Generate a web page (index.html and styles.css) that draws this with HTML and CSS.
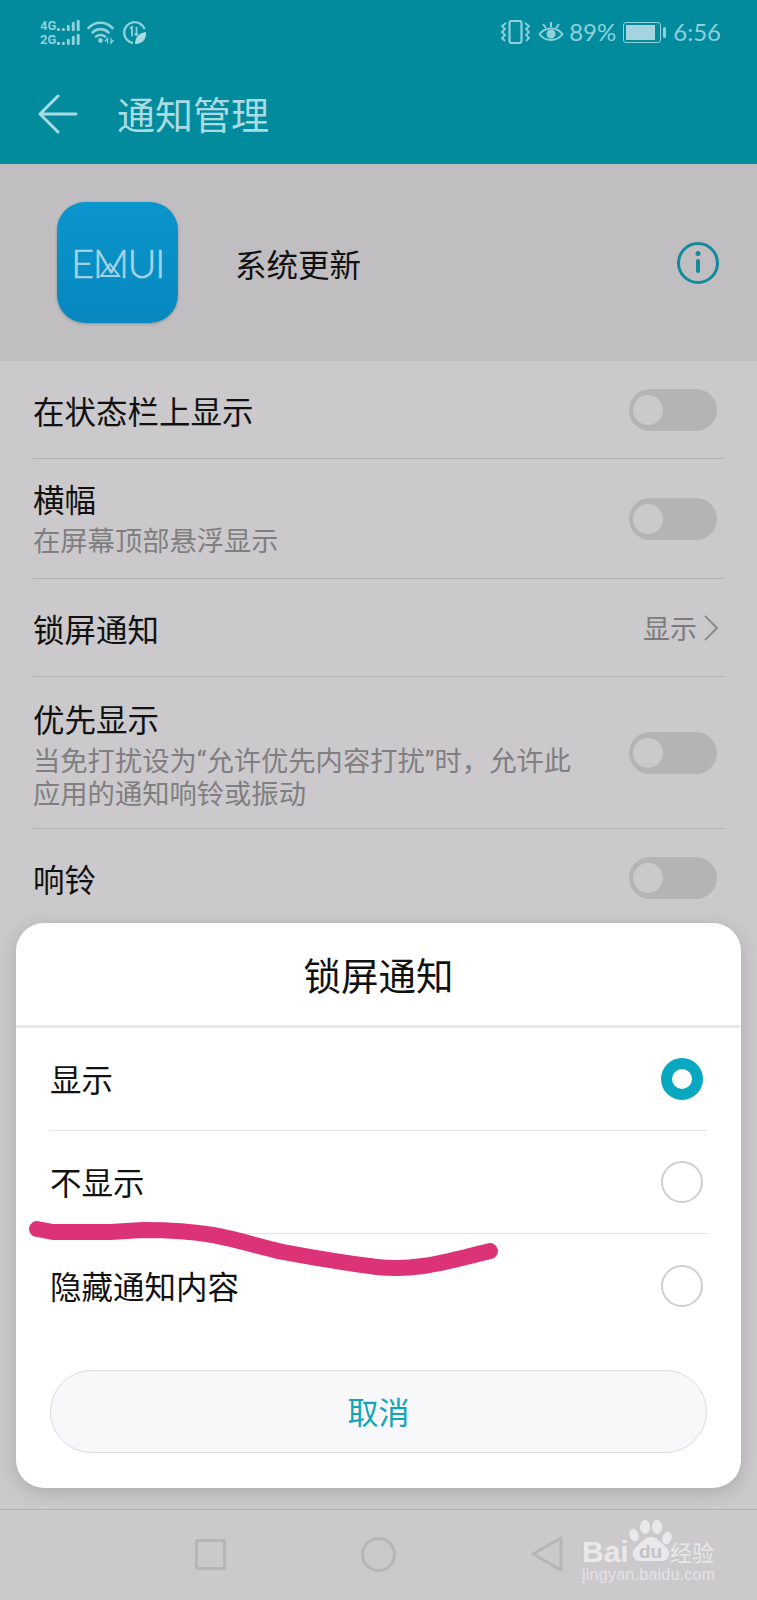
FILE: index.html
```html
<!DOCTYPE html>
<html lang="zh">
<head>
<meta charset="utf-8">
<title>通知管理</title>
<link rel="stylesheet" href="styles.css">
</head>
<body>
<div class="phone">
  <header class="topbar">
    <div class="status">
      <div class="status-group">
        <div class="signal">
          <div class="signal-line"><span class="net">4G</span><svg width="25" height="11" viewBox="0 0 25 11"><g fill="#8fd0da"><rect x="1" y="8" width="3" height="3" rx="1"/><rect x="6" y="8" width="3" height="3" rx="1"/><rect x="11" y="5" width="3" height="6" rx="1"/><rect x="16" y="2" width="3" height="9" rx="1"/><rect x="21" y="0" width="3" height="11" rx="1"/></g></svg></div>
          <div class="signal-line"><span class="net">2G</span><svg width="25" height="11" viewBox="0 0 25 11"><g fill="#8fd0da"><rect x="1" y="8" width="3" height="3" rx="1"/><rect x="6" y="8" width="3" height="3" rx="1"/><rect x="11" y="5" width="3" height="6" rx="1"/><rect x="16" y="2" width="3" height="9" rx="1"/><rect x="21" y="0" width="3" height="11" rx="1"/></g></svg></div>
        </div>
        <svg class="wifi" width="28" height="25" viewBox="0 0 28 25" fill="none" stroke="#8fd0da" stroke-width="2.600" stroke-linecap="round"><path d="M1.500 8C8 1 19 1 25.500 8"/><path d="M5.500 12.500C10 8 17 8 21.500 12.500"/><path d="M9 16.500C11.500 14.500 15.500 14.500 18 16.500"/><circle cx="13.500" cy="20.500" r="2.400" fill="#8fd0da" stroke="none"/><path d="M20.500 23V18.500L18.300 21M24 18.500V23L26.200 20.500" stroke-width="1.300"/></svg>
        <svg class="saver" width="25" height="25" viewBox="0 0 25 25" fill="none"><path d="M22.500 9A10.500 10.500 0 1 0 11 23" stroke="#8fd0da" stroke-width="2.400"/><path d="M8 8.500L10 7V16.500M14.500 7V15.500L12.800 13.500M14.500 15.500L16.200 13.500" stroke="#8fd0da" stroke-width="1.800"/><path d="M12.500 24.500C12.500 17 17 12 24.500 11.500C25 19.500 21 24.500 12.500 24.500Z" fill="#a9dbe2" stroke="#028a9d" stroke-width="1"/></svg>
      </div>
      <div class="status-group status-right">
        <svg class="vibrate" width="31" height="24" viewBox="0 0 31 24" fill="none" stroke="#8fd0da" stroke-width="2.200"><rect x="9.500" y="1" width="12" height="22" rx="2"/><path d="M6 3L2 6L5 9L2 12L5 15L2 18L5 21M25 3L29 6L26 9L29 12L26 15L29 18L26 21" stroke-width="1.800"/></svg>
        <svg class="eye" width="26" height="23" viewBox="0 0 26 23" fill="none" stroke="#8fd0da" stroke-width="2"><path d="M1.500 13C7 5.500 19 5.500 24.500 13C19 21 7 21 1.500 13Z"/><circle cx="13" cy="13" r="4.500" fill="#8fd0da" stroke="none"/><path d="M13 1V6M5 3L8 7M21 3L18 7"/></svg>
        <span class="pct">89%</span>
        <svg class="battery" width="44" height="21" viewBox="0 0 44 21"><rect x="0.500" y="0.500" width="37" height="20" rx="2.500" fill="none" stroke="#8fd0da"/><rect x="3" y="3" width="29" height="15" fill="#a6d4de"/><rect x="40" y="5" width="3" height="11" rx="1.500" fill="#8fd0da"/></svg>
        <span class="time">6:56</span>
      </div>
    </div>
    <div class="toolbar">
      <svg class="back" width="40" height="40" viewBox="0 0 40 40" fill="none" stroke="#a9dbe2" stroke-width="3" stroke-linecap="round" stroke-linejoin="round"><path d="M20 2L2 20L20 38M2 20H38"/></svg>
      <h1 class="page-title">通知管理</h1>
    </div>
  </header>

  <section class="app-head">
    <div class="app-icon"><span class="emui">E<span class="emui-m">M<svg class="emui-x" width="30" height="14" viewBox="0 0 30 14" fill="none" stroke="#a5d3e4" stroke-width="2"><path d="M15 1L6 13H24Z"/></svg></span>UI</span></div>
    <div class="app-name">系统更新</div>
    <svg class="info" width="44" height="44" viewBox="0 0 44 44" fill="none"><circle cx="22" cy="22" r="19.500" stroke="#128a9c" stroke-width="3"/><circle cx="22" cy="12.500" r="2.500" fill="#128a9c"/><rect x="20" y="18" width="4" height="14" rx="2" fill="#128a9c"/></svg>
  </section>

  <main class="list">
    <div class="row row-a">
      <div class="row-text"><div class="row-title">在状态栏上显示</div></div>
      <span class="switch"><span class="knob"></span></span>
    </div>
    <div class="row row-b">
      <div class="row-text"><div class="row-title">横幅</div><div class="row-sub">在屏幕顶部悬浮显示</div></div>
      <span class="switch"><span class="knob"></span></span>
    </div>
    <div class="row row-a">
      <div class="row-text"><div class="row-title">锁屏通知</div></div>
      <span class="row-value">显示<svg width="16" height="26" viewBox="0 0 16 26" fill="none" stroke="#8c8a8d" stroke-width="2"><path d="M2 1L14 13L2 25"/></svg></span>
    </div>
    <div class="row row-c">
      <div class="row-text row-text-low"><div class="row-title">优先显示</div><div class="row-sub">当免打扰设为“允许优先内容打扰”时，允许此<br>应用的通知响铃或振动</div></div>
      <span class="switch"><span class="knob"></span></span>
    </div>
    <div class="row row-a row-last">
      <div class="row-text"><div class="row-title">响铃</div></div>
      <span class="switch"><span class="knob"></span></span>
    </div>
  </main>

  <nav class="navbar">
    <span class="nav-square"></span>
    <span class="nav-circle"></span>
    <svg class="nav-back" width="32" height="36" viewBox="0 0 32 36" fill="none" stroke="#b7b5b8" stroke-width="3" stroke-linejoin="round"><path d="M30 2V34L2 18Z"/></svg>
  </nav>

  <div class="dialog">
    <div class="dialog-title">锁屏通知</div>
    <div class="options">
      <div class="option"><span class="option-label">显示</span><span class="radio radio-on"></span></div>
      <div class="option"><span class="option-label">不显示</span><span class="radio"></span></div>
      <div class="option"><span class="option-label">隐藏通知内容</span><span class="radio"></span></div>
    </div>
    <div class="cancel">取消</div>
  </div>

  <svg class="scribble" width="757" height="1600" viewBox="0 0 757 1600" fill="none"><path d="M37 1229L53 1232L110 1232L143 1230C170 1230 190 1231 213 1235C240 1240 260 1247 283 1252C315 1258 345 1263 377 1267C395 1269 410 1268 423 1266C445 1263 465 1257 490 1251" stroke="#dc3278" stroke-width="16" stroke-linecap="round" stroke-linejoin="round"/></svg>

  <div class="watermark">
    <svg class="paw" width="44" height="44" viewBox="0 0 44 44"><g fill="#e9e8ea"><ellipse cx="16" cy="9" rx="5" ry="7"/><ellipse cx="28" cy="9" rx="5" ry="7"/><ellipse cx="5" cy="17" rx="4.500" ry="6.500" transform="rotate(-20 5 17)"/><ellipse cx="38" cy="20" rx="4.500" ry="6.500" transform="rotate(20 38 20)"/><path d="M22 19C28 19 31 24 37 29C43 35 40 43 32 43H12C4 43 1 35 7 29C13 24 16 19 22 19Z"/></g></svg>
    <span class="wm-bai">Bai</span>
    <span class="wm-du">du</span>
    <span class="wm-jy">经验</span>
    <span class="wm-url">jingyan.baidu.com</span>
  </div>
</div>
</body>
</html>
```
FILE: styles.css
```css
* { box-sizing: border-box; }
html, body { margin: 0; padding: 0; }
body { font-family: "Noto Sans CJK SC", "Noto Sans", sans-serif; color: #111; }
.phone { position: relative; width: 757px; height: 1600px; overflow: hidden; display: flex; flex-direction: column; background: #cbc9cc; }

.topbar { height: 164px; background: #028a9d; flex: none; }
.status { height: 64px; padding: 0 36px 0 40px; display: flex; justify-content: space-between; align-items: center; }
.status-group { display: flex; align-items: center; }
.signal { width: 41px; display: flex; flex-direction: column; gap: 3px; margin-right: 6px; }
.signal-line { display: flex; align-items: center; justify-content: space-between; height: 11px; }
.net { font: 700 13px/11px "Liberation Sans Narrow", "Roboto", sans-serif; color: #8fd0da; }
.wifi { margin-right: 7px; }
.status-right { gap: 5px; }
.vibrate { margin-right: 2px; }
.pct, .time { font: 400 24px/28px "Lato", "Roboto", sans-serif; color: #8fd0da; }
.battery { margin: 0 2px; }
.time { margin-left: -1px; }

.toolbar { height: 100px; padding-left: 38px; display: flex; align-items: center; }
.back { flex: none; }
.page-title { margin: -2px 0 0 39px; font-size: 38px; font-weight: 400; line-height: 50px; color: #a9dbe2; }

.app-head { height: 197px; background: #c0bec1; flex: none; display: flex; align-items: center; padding: 0 37px 0 57px; }
.app-icon { width: 121px; height: 121px; border-radius: 28px; background: linear-gradient(#0a95cc, #0688bf); box-shadow: 0 1px 3px rgba(0,0,0,.25); display: flex; align-items: center; justify-content: center; }
.emui { font: 300 40px/44px "Lato", "Roboto", sans-serif; color: #a5d3e4; letter-spacing: -1.500px; -webkit-text-stroke: .6px #a5d3e4; }
.emui-m { position: relative; display: inline-block; }
.emui-x { position: absolute; left: 2px; bottom: 8px; }
.app-name { flex: 1; margin-left: 57px; font-size: 31.500px; line-height: 44px; color: #111; }

.list { flex: 1; padding: 0 33px; }
.row { display: flex; align-items: center; justify-content: space-between; padding-right: 7px; border-bottom: 1px solid #b3b1b4; }
.row-a { height: 98px; }
.row-b { height: 120px; }
.row-c { height: 152px; }
.row-last { border-bottom: 0; }
.row-text-low { margin-top: 5px; }
.row-title { font-size: 31.500px; line-height: 40px; color: #111; }
.row-sub { margin-top: 8px; font-family: "Roboto", "Noto Sans CJK SC", sans-serif; font-size: 27.300px; line-height: 33px; color: #807e81; }
.row-value { display: flex; align-items: center; gap: 6px; font-size: 27px; color: #7c7a7d; margin-right: -2px; }
.switch { flex: none; width: 88px; height: 42px; border-radius: 21px; background: #b5b3b6; padding: 6px 0 0 4px; }
.knob { display: block; width: 30px; height: 30px; border-radius: 50%; background: #cbc9cc; }

.navbar { height: 91px; flex: none; border-top: 1px solid #b3b1b4; display: flex; align-items: center; padding: 0 0 2px 195px; }
.nav-square { width: 31px; height: 31px; border: 3px solid #b7b5b8; border-radius: 2px; }
.nav-circle { width: 35px; height: 35px; border: 3px solid #b7b5b8; border-radius: 50%; margin-left: 135px; }
.nav-back { margin-left: 135px; }

.dialog { position: absolute; left: 16px; top: 923px; width: 725px; height: 565px; background: #fff; border-radius: 28px; box-shadow: 0 4px 18px rgba(0,0,0,.16); display: flex; flex-direction: column; }
.dialog-title { height: 105px; border-bottom: 3px solid #e8e8e8; text-align: center; font-size: 37.500px; line-height: 102px; color: #111; flex: none; }
.options { padding: 0 34px; }
.option { height: 103px; display: flex; justify-content: space-between; align-items: center; font-size: 31.500px; padding: 0 4px 0 0; border-bottom: 1px solid #e4e4e4; color: #111; }
.option:last-child { border-bottom: 0; }
.option-label { margin-top: -2px; }
.radio { width: 42px; height: 42px; border-radius: 50%; border: 2px solid #cfcfcf; }
.radio-on { border: 11px solid #07a8c0; }
.cancel { margin: 33px 34px 0; height: 83px; border: 1px solid #dcdcdc; border-radius: 42px; background: #f8f7f9; text-align: center; font-size: 31px; line-height: 79px; color: #12a5b8; flex: none; }

.scribble { position: absolute; left: 0; top: 0; pointer-events: none; }

.watermark { position: absolute; left: 582px; top: 1518px; width: 135px; height: 64px; color: #e9e8ea; }
.paw { position: absolute; left: 47px; top: 0; }
.wm-bai { position: absolute; left: 0; top: 17px; font: 700 30px/34px "Liberation Sans", sans-serif; }
.wm-du { position: absolute; left: 57px; top: 24px; font: 700 19px/20px "Liberation Sans", sans-serif; color: #c4c2c5; }
.wm-jy { position: absolute; left: 88px; top: 20px; font-size: 22px; line-height: 26px; white-space: nowrap; }
.wm-url { position: absolute; left: 0; top: 48px; font: 400 16px/18px "Liberation Sans", sans-serif; letter-spacing: .25px; white-space: nowrap; color: #e4e3e5; }
```
